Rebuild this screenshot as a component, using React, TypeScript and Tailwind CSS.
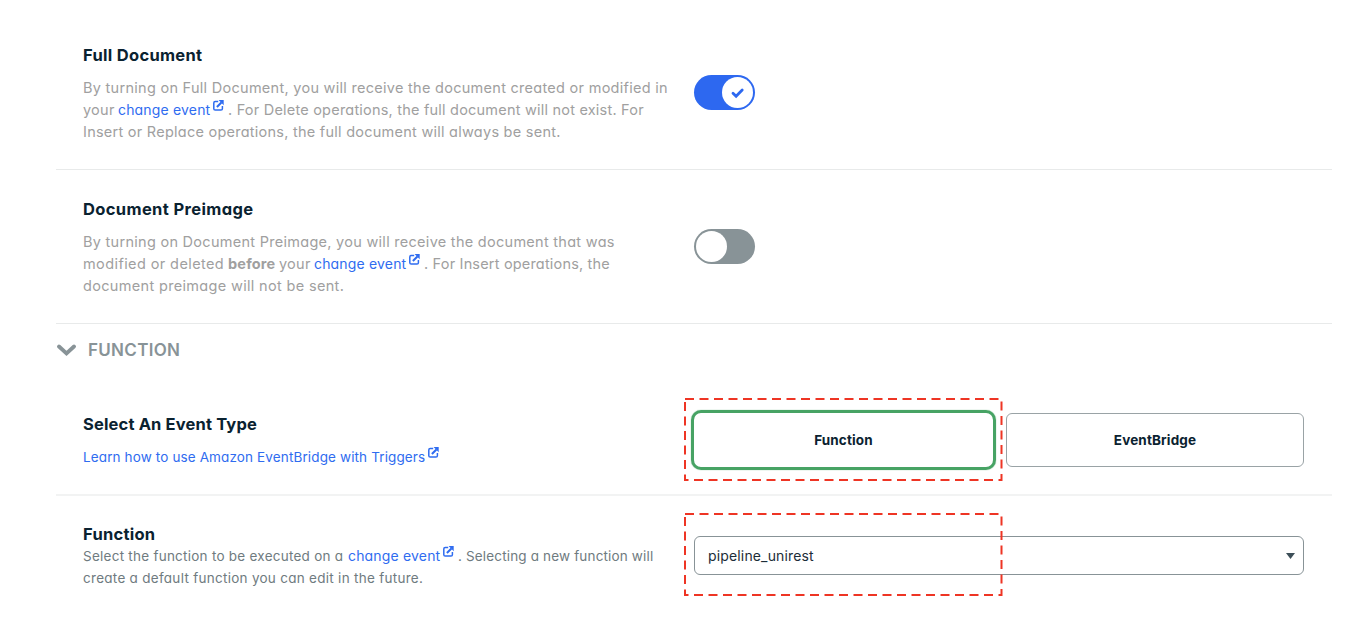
import type { ReactNode } from "react";

const ExternalIcon = ({ className = "" }: { className?: string }) => (
  <svg viewBox="0 0 11 11" className={`h-[11px] w-[11px] shrink-0 ${className}`} fill="none">
    <path d="M5.2 1.5H2.2A1.4 1.4 0 0 0 .8 2.9v5.800A1.400 1.400 0 0 0 2.200 10.100h5.800A1.400 1.400 0 0 0 9.400 8.700V5.900" stroke="#2f6cf0" strokeWidth="1.500" />
    <path d="M3.900 6.900 8.400 2.400" stroke="#2f6cf0" strokeWidth="2.100" />
    <path d="M5.600.1h5.100v5.100z" fill="#2f6cf0" />
  </svg>
);

const Line = ({ children }: { children: ReactNode }) => (
  <div className="flex h-[22px] items-center whitespace-pre">{children}</div>
);

const Seg = ({ className, children }: { className: string; children: ReactNode }) => (
  <span className={`shrink-0 ${className}`}>{children}</span>
);

const ChangeEventLink = () => (
  <>
    <Seg className="w-[95px] pb-[2px] text-[14px] tracking-[0.17px] text-[#2f6cf0]">change event</Seg>
    <ExternalIcon className="-mt-[9px] mr-[4px]" />
  </>
);

const Highlight = ({ className }: { className: string }) => (
  <svg className={`pointer-events-none absolute h-[84px] w-[319px] ${className}`} viewBox="0 0 319 84" fill="none">
    <rect x="1" y="1" width="316.500" height="81" stroke="#ee3524" strokeWidth="2" strokeDasharray="9 5.500" />
  </svg>
);

export default function App() {
  return (
    <main className="h-[636px] w-[1358px] overflow-hidden bg-white pl-14 font-['Inter',sans-serif] text-[#0a2230] [font-feature-settings:'cv11']">
      <section className="flex h-[170px] w-[1276px] border-b border-[#e8eaea] pl-[27px]">
        <div className="w-[611px] pt-[44px]">
          <h2 className="flex h-[22px] items-center text-[16.5px] font-bold tracking-[0.3px] whitespace-nowrap">Full Document</h2>
          <div className="mt-[11px] text-[14.5px] text-[#a0a0a0]">
            <Line><Seg className="tracking-[0.28px]">By turning on Full Document, you will receive the document created or modified in</Seg></Line>
            <Line>
              <Seg className="w-[35px] tracking-[0.25px]">your</Seg>
              <ChangeEventLink />
              <Seg className="tracking-[0.21px]">. For Delete operations, the full document will not exist. For</Seg>
            </Line>
            <Line><Seg className="tracking-[0.25px]">Insert or Replace operations, the full document will always be sent.</Seg></Line>
          </div>
        </div>
        <div className="mt-[75px] flex h-[35px] w-[61px] items-center justify-end rounded-full bg-[#2d68f0] pr-[2px]">
          <div className="flex h-[31px] w-[31px] items-center justify-center rounded-full bg-white">
            <svg viewBox="0 0 14 12" className="h-3 w-3.5" fill="none">
              <path d="M2 6.2 5.1 9.3 11.2 3.1" stroke="#2d68f0" strokeWidth="2.8" strokeLinecap="round" />
            </svg>
          </div>
        </div>
      </section>

      <section className="flex h-[154px] w-[1276px] border-b border-[#e8eaea] pl-[27px]">
        <div className="w-[611px] pt-[28px]">
          <h2 className="flex h-[22px] items-center text-[16.5px] font-bold tracking-[0.37px] whitespace-nowrap">Document Preimage</h2>
          <div className="mt-[11px] text-[14.5px] text-[#a0a0a0]">
            <Line><Seg className="tracking-[0.28px]">By turning on Document Preimage, you will receive the document that was</Seg></Line>
            <Line>
              <Seg className="w-[145px] tracking-[0.4px]">modified or deleted</Seg>
              <Seg className="w-[51px] font-bold tracking-[0.18px]">before</Seg>
              <Seg className="w-[35px] tracking-[0.25px]">your</Seg>
              <ChangeEventLink />
              <Seg className="tracking-[0.18px]">. For Insert operations, the</Seg>
            </Line>
            <Line><Seg className="tracking-[0.33px]">document preimage will not be sent.</Seg></Line>
          </div>
        </div>
        <div className="mt-[59px] flex h-[35px] w-[61px] items-center rounded-full bg-[#889397] pl-[2px]">
          <div className="h-[31px] w-[31px] rounded-full bg-white" />
        </div>
      </section>

      <header className="flex h-[52px] items-center gap-[12px] text-[#889397]">
        <svg viewBox="0 0 20 14" className="h-3.5 w-5" fill="none">
          <path d="M3 3.5 10.5 10.5 18 3.5" stroke="#889397" strokeWidth="3.8" strokeLinecap="round" />
        </svg>
        <h3 className="pt-[2px] text-[17px] font-semibold tracking-[0.3px]">FUNCTION</h3>
      </header>

      <section className="relative flex h-[120px] w-[1276px] border-b-2 border-[#f2f3f3] pl-[27px]">
        <div className="w-[608px] pt-[37px]">
          <h2 className="flex h-[22px] items-center text-[16.5px] font-bold tracking-[0.15px] whitespace-nowrap">Select An Event Type</h2>
          <div className="mt-[11px] text-[13.5px] text-[#2f6cf0]">
            <Line>
              <Seg className="w-[345px] tracking-[0.13px]">Learn how to use Amazon EventBridge with Triggers</Seg>
              <ExternalIcon className="-mt-[9px]" />
            </Line>
          </div>
        </div>
        <div className="mt-[34px] flex h-[60px] items-center gap-[10px] text-[13.5px] font-bold tracking-[0.15px]">
          <button className="h-[60px] w-[305px] rounded-[10px] border-[3px] border-[#47a364] shadow-[0_0_1px_#47a364]">Function</button>
          <button className="h-[54px] w-[298px] rounded-[6px] border border-[#9aa3a6]">EventBridge</button>
        </div>
        <Highlight className="top-[22px] left-[628px]" />
      </section>

      <section className="relative flex h-[140px] w-[1276px] pl-[27px]">
        <div className="w-[611px] pt-[27px]">
          <h2 className="flex h-[22px] items-center text-[16.5px] font-bold tracking-[0.25px]">Function</h2>
          <div className="text-[13.5px] text-[#6f7b80]">
            <Line>
              <Seg className="w-[265px] tracking-[0.25px]">Select the function to be executed on a</Seg>
              <ChangeEventLink />
              <Seg className="tracking-[0.16px]">. Selecting a new function will</Seg>
            </Line>
            <Line><Seg className="tracking-[0.28px]">create a default function you can edit in the future.</Seg></Line>
          </div>
        </div>
        <div className="mt-[40px] flex h-[39px] w-[610px] items-center justify-between rounded-[6px] border border-[#889397] pr-[8px] pl-[13px] text-[14px] tracking-[0.15px] text-[#1c2d38]">
          <span>pipeline_unirest</span>
          <svg viewBox="0 0 9 6" className="h-1.5 w-[9px]"><path d="M0 0h9L4.5 6z" fill="#3d4f58" /></svg>
        </div>
        <Highlight className="top-[17px] left-[628px]" />
      </section>
    </main>
  );
}
